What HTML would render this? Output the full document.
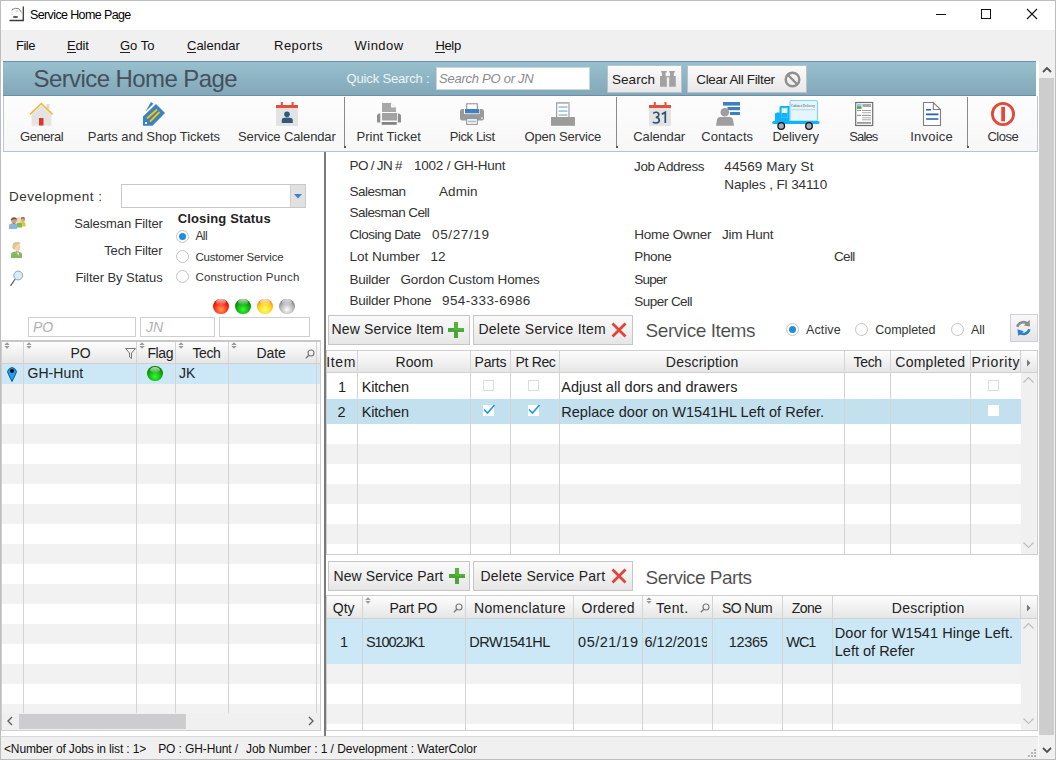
<!DOCTYPE html>
<html><head><meta charset="utf-8">
<style>
*{box-sizing:border-box;margin:0;padding:0}
html,body{width:1056px;height:760px;overflow:hidden;background:#fff;font-family:"Liberation Sans",sans-serif;color:#222;font-size:12px}
.a{position:absolute;white-space:pre}
svg{position:absolute;overflow:visible}
</style></head><body>
<div class="a" style="left:0px;top:0px;width:1056px;height:30px;background:#fff"></div>
<svg style="left:8px;top:5px" width="18" height="18" viewBox="0 0 18 18"><path d="M15.3 1.5V15.5H1.5" fill="none" stroke="#3a3a3a" stroke-width="1.3"/><ellipse cx="7.5" cy="12" rx="2.8" ry="0.8" fill="#111"/><path d="M4 4.5Q7.5 2.5 11 3.8L13.5 7.5" fill="none" stroke="#777" stroke-width="0.9"/><path d="M4 5V10" stroke="#bbb" stroke-width="0.8" stroke-dasharray="1 1"/><circle cx="9" cy="6" r="0.6" fill="#666"/></svg>
<div class="a" style="left:30.0px;top:9px;font-size:12.5px;line-height:12.5px;color:#000;font-weight:400;letter-spacing:-0.62px;">Service Home Page</div>
<div class="a" style="left:936px;top:14px;width:10px;height:1px;background:#111"></div>
<div class="a" style="left:981px;top:9px;width:10px;height:10px;border:1px solid #111"></div>
<svg style="left:1027px;top:9px" width="10" height="10" viewBox="0 0 10 10"><path d="M0 0L10 10M10 0L0 10" stroke="#111" stroke-width="1.1"/></svg>
<div class="a" style="left:0px;top:30px;width:1056px;height:31px;background:#f0f0f0"></div>
<div class="a" style="left:16.0px;top:39px;font-size:13px;line-height:13px;color:#111;font-weight:400;letter-spacing:-0.50px;">File</div>
<div class="a" style="left:67.0px;top:39px;font-size:13px;line-height:13px;color:#111;font-weight:400;letter-spacing:-0.17px;">Edit</div>
<div class="a" style="left:67px;top:52px;width:9px;height:1px;background:#222"></div>
<div class="a" style="left:120.0px;top:39px;font-size:13px;line-height:13px;color:#111;font-weight:400;letter-spacing:0.00px;">Go To</div>
<div class="a" style="left:120px;top:52px;width:10px;height:1px;background:#222"></div>
<div class="a" style="left:187.0px;top:39px;font-size:13px;line-height:13px;color:#111;font-weight:400;letter-spacing:0.00px;">Calendar</div>
<div class="a" style="left:187px;top:52px;width:9px;height:1px;background:#222"></div>
<div class="a" style="left:274.0px;top:39px;font-size:13px;line-height:13px;color:#111;font-weight:400;letter-spacing:0.50px;">Reports</div>
<div class="a" style="left:354.6px;top:39px;font-size:13px;line-height:13px;color:#111;font-weight:400;letter-spacing:0.46px;">Window</div>
<div class="a" style="left:435.4px;top:39px;font-size:13px;line-height:13px;color:#111;font-weight:400;letter-spacing:-0.33px;">Help</div>
<div class="a" style="left:435px;top:52px;width:10px;height:1px;background:#222"></div>
<div class="a" style="left:3px;top:61px;width:1033px;height:35px;background:linear-gradient(#97c0ce,#83a8b9);border-top:1px solid #6a8da8;border-bottom:1px solid #6a8da8"></div>
<div class="a" style="left:33.5px;top:67px;font-size:24px;line-height:24px;color:#46505c;font-weight:400;letter-spacing:-0.58px;">Service Home Page</div>
<div class="a" style="left:346.6px;top:72px;font-size:13px;line-height:13px;color:#eef4f8;font-weight:400;letter-spacing:-0.17px;">Quick Search :</div>
<div class="a" style="left:436px;top:67px;width:154px;height:23px;background:#fff;border:1px solid #c9d6de"></div>
<div class="a" style="left:439.0px;top:72px;font-size:13px;line-height:13px;color:#8a8a8a;font-weight:400;letter-spacing:-0.25px;;font-style:italic">Search PO or JN</div>
<div class="a" style="left:607px;top:65px;width:75px;height:28px;background:linear-gradient(#fbfbfb,#e8e8e8);border:1px solid #b8c3c9"></div>
<div class="a" style="left:612.0px;top:73px;font-size:13.5px;line-height:13.5px;color:#222;font-weight:400;letter-spacing:0.04px;">Search</div>
<svg style="left:655px;top:66px" width="30" height="26" viewBox="0 0 30 26"><path d="M6.2 5H11.8V6.6H10.6V10H11.8V20.8H5V10H7V6.6H6.2z" fill="#a2a2a2"/><path d="M14.2 5H19.8V6.6H18.9V10H20.8V20.8H14.2V10H15V6.6H14.2z" fill="#a2a2a2"/><rect x="11.5" y="10" width="3" height="1.3" fill="#a2a2a2"/><rect x="11.5" y="13.8" width="3" height="7" fill="#a2a2a2" opacity="0"/></svg>
<div class="a" style="left:687px;top:65px;width:120px;height:28px;background:linear-gradient(#fbfbfb,#e8e8e8);border:1px solid #b8c3c9"></div>
<div class="a" style="left:696.3px;top:73px;font-size:13.5px;line-height:13.5px;color:#222;font-weight:400;letter-spacing:-0.35px;">Clear All Filter</div>
<svg style="left:784px;top:71px" width="17" height="17" viewBox="0 0 17 17"><circle cx="8.5" cy="8.5" r="6.8" fill="none" stroke="#8f8f8f" stroke-width="2.4"/><path d="M4 4L13 13" stroke="#8f8f8f" stroke-width="2.4"/></svg>
<div class="a" style="left:1036px;top:61px;width:3px;height:676px;background:#fff"></div>
<div class="a" style="left:1039px;top:61px;width:16px;height:698px;background:#f0f0f0"></div>
<div class="a" style="left:1039px;top:78px;width:15px;height:657px;background:#cdcdcd"></div>
<svg style="left:1042px;top:66px" width="10" height="8" viewBox="0 0 10 8"><path d="M1 6L5 2L9 6" fill="none" stroke="#505050" stroke-width="1.8"/></svg>
<svg style="left:1042px;top:746px" width="10" height="8" viewBox="0 0 10 8"><path d="M1 2L5 6L9 2" fill="none" stroke="#505050" stroke-width="1.8"/></svg>
<div class="a" style="left:3px;top:96px;width:1035px;height:56px;background:linear-gradient(#fdfdfd,#f7f7f7);border-left:1px solid #b9c9da;border-right:1px solid #b9c9da;border-bottom:1px solid #b0c2d6"></div>
<div class="a" style="left:344px;top:97px;width:1px;height:51px;background:#8a8a8a"></div>
<div class="a" style="left:343.5px;top:146px;width:2px;height:2px;background:#555"></div>
<div class="a" style="left:616px;top:97px;width:1px;height:51px;background:#8a8a8a"></div>
<div class="a" style="left:615.5px;top:146px;width:2px;height:2px;background:#555"></div>
<div class="a" style="left:967px;top:97px;width:1px;height:51px;background:#8a8a8a"></div>
<div class="a" style="left:966.5px;top:146px;width:2px;height:2px;background:#555"></div>
<div class="a" style="left:20.0px;top:130px;font-size:13px;line-height:13px;color:#333;font-weight:400;letter-spacing:-0.42px;">General</div>
<div class="a" style="left:87.8px;top:130px;font-size:13px;line-height:13px;color:#333;font-weight:400;letter-spacing:-0.07px;">Parts and Shop Tickets</div>
<div class="a" style="left:238.0px;top:130px;font-size:13px;line-height:13px;color:#333;font-weight:400;letter-spacing:-0.13px;">Service Calendar</div>
<div class="a" style="left:356.5px;top:130px;font-size:13px;line-height:13px;color:#333;font-weight:400;letter-spacing:0.00px;">Print Ticket</div>
<div class="a" style="left:449.7px;top:130px;font-size:13px;line-height:13px;color:#333;font-weight:400;letter-spacing:-0.38px;">Pick List</div>
<div class="a" style="left:524.5px;top:130px;font-size:13px;line-height:13px;color:#333;font-weight:400;letter-spacing:-0.18px;">Open Service</div>
<div class="a" style="left:633.3px;top:130px;font-size:13px;line-height:13px;color:#333;font-weight:400;letter-spacing:-0.14px;">Calendar</div>
<div class="a" style="left:701.3px;top:130px;font-size:13px;line-height:13px;color:#333;font-weight:400;letter-spacing:0.07px;">Contacts</div>
<div class="a" style="left:772.5px;top:130px;font-size:13px;line-height:13px;color:#333;font-weight:400;letter-spacing:-0.07px;">Delivery</div>
<div class="a" style="left:849.3px;top:130px;font-size:13px;line-height:13px;color:#333;font-weight:400;letter-spacing:-0.88px;">Sales</div>
<div class="a" style="left:910.3px;top:130px;font-size:13px;line-height:13px;color:#333;font-weight:400;letter-spacing:0.20px;">Invoice</div>
<div class="a" style="left:987.4px;top:130px;font-size:13px;line-height:13px;color:#333;font-weight:400;letter-spacing:-0.50px;">Close</div>
<svg style="left:29px;top:102px" width="26" height="26" viewBox="0 0 26 26"><path d="M2.5 12L12.5 3L22.5 12V24H2.5z" fill="#e4e4e4" stroke="#f2f2f2" stroke-width="1"/><rect x="17.5" y="2" width="3" height="5" fill="#dcdcdc"/><path d="M1 12.3L12.3 1.5L23.6 12.3" fill="none" stroke="#f4b92c" stroke-width="1.6"/><rect x="10" y="16" width="4.5" height="7.5" fill="#d8392b"/></svg>
<svg style="left:135px;top:98px" width="32" height="32" viewBox="0 0 32 32"><path d="M8 18.5L21 6L30 15L17.5 27.8H8z" fill="#3b82c4"/><path d="M10.5 13.5L16 4L18.5 5.8z" fill="#3b82c4"/><path d="M12.5 20L21.5 12M15.5 23L24 14.5" stroke="#f7c600" stroke-width="1.8" stroke-linecap="round"/><rect x="10" y="24" width="2" height="2" fill="#fff"/></svg>
<svg style="left:270px;top:98px" width="35" height="32" viewBox="0 0 35 32"><rect x="6" y="11" width="22" height="17" fill="#e3e3e3"/><rect x="6" y="7" width="22" height="3.2" fill="#e0503c"/><rect x="10.8" y="4" width="2" height="3.5" fill="#e0503c"/><rect x="21.6" y="4" width="2" height="3.5" fill="#e0503c"/><circle cx="17" cy="16.3" r="2.8" fill="#2f5a78"/><path d="M11.8 25V22C11.8 20.2 13.5 19.5 17 19.5C20.5 19.5 22.8 20.2 22.8 22V25z" fill="#2f5a78"/></svg>
<svg style="left:372px;top:98px" width="35" height="32" viewBox="0 0 35 32"><path d="M10 5H19L24 9.5V14H10z" fill="#a8a8a8"/><path d="M19 5V9.5H24" fill="#fafafa"/><rect x="10" y="15" width="15" height="7.5" fill="#a3a3a3"/><path d="M5 17L7 15.5H8.3V24.5H5z" fill="#8f8f8f"/><path d="M29 17L27 15.5H25.8V24.5H29z" fill="#8f8f8f"/><rect x="9.7" y="24" width="15" height="2.8" fill="#838383"/></svg>
<svg style="left:455px;top:98px" width="35" height="32" viewBox="0 0 35 32"><rect x="11.7" y="5.8" width="10.6" height="6" fill="#fff" stroke="#8a8a8a" stroke-width="1"/><rect x="5" y="11" width="24" height="11.5" rx="2.2" fill="#9a9a9a"/><rect x="9" y="11" width="15.5" height="5" fill="#fff"/><rect x="10" y="11" width="14" height="4" fill="#3f7ec0"/><rect x="10" y="15" width="14" height="1.2" fill="#bcd3e8"/><rect x="11.7" y="20.3" width="10.6" height="6" fill="#fff" stroke="#8a8a8a" stroke-width="1"/><rect x="13" y="21.5" width="8" height="1.2" fill="#c8dbeb"/><rect x="13" y="23" width="8" height="1.3" fill="#9fc0dd"/><rect x="26" y="19.6" width="2" height="1" fill="#fff"/></svg>
<svg style="left:545px;top:98px" width="35" height="32" viewBox="0 0 35 32"><rect x="11.7" y="4.7" width="12.3" height="15" fill="#fff" stroke="#8a8a8a" stroke-width="1"/><rect x="12" y="4.5" width="11.8" height="1.5" fill="#c2c2c2"/><rect x="13.5" y="8.3" width="9" height="1.5" fill="#98bcdb"/><rect x="13.5" y="12.3" width="9" height="1.5" fill="#98bcdb"/><rect x="13.5" y="16.3" width="9" height="1.5" fill="#98bcdb"/><rect x="6" y="19" width="24" height="8.8" fill="#9c9c9c"/></svg>
<svg style="left:642px;top:98px" width="35" height="32" viewBox="0 0 35 32"><rect x="7" y="11" width="22" height="17" fill="#e3e3e3"/><rect x="7" y="7" width="22" height="3.2" fill="#e0503c"/><rect x="11.8" y="4" width="2" height="3.5" fill="#e0503c"/><rect x="22.5" y="4" width="2" height="3.5" fill="#e0503c"/><path d="M11.2 15.3Q13 14 14.8 14.3Q17 14.8 16.8 17Q16.5 19 13.8 19.2Q17.3 19.5 17.3 22.2Q17.2 25 14 25Q12 25 10.8 24" fill="none" stroke="#2a4f6e" stroke-width="1.6"/><path d="M19.8 16.2L23.3 14.2V25" fill="none" stroke="#2a4f6e" stroke-width="1.7"/></svg>
<svg style="left:710px;top:98px" width="35" height="32" viewBox="0 0 35 32"><rect x="13" y="4" width="17" height="3.6" fill="#3f7fc0"/><rect x="17.5" y="9" width="12.5" height="3.2" fill="#3f7fc0"/><rect x="20" y="14" width="10" height="3" fill="#3f7fc0"/><circle cx="14.8" cy="14.3" r="4.3" fill="#9e9e9e"/><path d="M6 27.8L7 21.5C7.5 19.5 9 19 11 19H18.5C20.5 19 22.5 19.5 23 21.5L24 27.8z" fill="#9e9e9e"/></svg>
<svg style="left:768px;top:96px" width="56" height="36" viewBox="0 0 56 36"><rect x="22" y="4.5" width="27.5" height="20.5" rx="1.5" fill="#e6f5fc" stroke="#7fd6fb" stroke-width="1.2"/><text x="35" y="10.8" text-anchor="middle" font-family="Liberation Serif" font-size="3.5" fill="#444">Cabinet Delivery</text><rect x="23.5" y="13" width="23.5" height="1.3" fill="#b7e1f2"/><path d="M7 26V17.5L9 16.5H11.5V11.5C11.5 10.5 12.5 10 13.5 10H21.5V26z" fill="#10b4f8"/><rect x="13.5" y="12" width="6" height="9.5" fill="#e8f7fd" stroke="#5fc7f5" stroke-width="0.6"/><rect x="13.5" y="17" width="6" height="4.5" fill="#10b4f8"/><rect x="4.2" y="25" width="47.3" height="3" rx="1.5" fill="#10b4f8"/><circle cx="13.2" cy="30" r="3.3" fill="#9fb0b8" stroke="#111" stroke-width="1.3"/><circle cx="41" cy="30" r="3.3" fill="#9fb0b8" stroke="#111" stroke-width="1.3"/></svg>
<svg style="left:848px;top:98px" width="32" height="32" viewBox="0 0 32 32"><rect x="7.7" y="4.5" width="17" height="23" fill="#fff" stroke="#6e6e6e" stroke-width="1.2"/><rect x="9" y="5.8" width="4.5" height="2.5" fill="#8ccbf0"/><rect x="9" y="8.3" width="4.5" height="2.5" fill="#4aa52a"/><rect x="14.5" y="6" width="8.5" height="3" fill="#a8a8a8"/><rect x="9" y="12" width="4" height="1" fill="#9a9a9a"/><rect x="14" y="12" width="9" height="1" fill="#a0a0a0"/><rect x="14" y="14.2" width="9" height="1" fill="#b0b0b0"/><rect x="9" y="16.8" width="4" height="1.2" fill="#9a9a9a"/><rect x="14" y="16.8" width="9" height="1.2" fill="#a0a0a0"/><rect x="14" y="19.3" width="9" height="1" fill="#b0b0b0"/><rect x="14" y="21.3" width="9" height="1" fill="#a8a8a8"/><rect x="9" y="24" width="14" height="1.8" fill="#9a9a9a"/></svg>
<svg style="left:916px;top:98px" width="32" height="32" viewBox="0 0 32 32"><path d="M7.5 4.5H17.3L24.5 11.5V27.5H7.5z" fill="#fff" stroke="#7e7e7e" stroke-width="1.1"/><path d="M17.3 4.5V11.5H24.5" fill="none" stroke="#7e7e7e" stroke-width="1.1"/><path d="M10.7 11.7H14.5M10.7 16.4H21.8M10.7 21H21.8" stroke="#1f5fae" stroke-width="1.6" stroke-linecap="round"/></svg>
<svg style="left:986px;top:98px" width="34" height="32" viewBox="0 0 34 32"><circle cx="17" cy="16" r="10.6" fill="none" stroke="#e04a3a" stroke-width="2.8"/><rect x="15.2" y="8.8" width="3.8" height="14.5" fill="#e04a3a"/></svg>
<div class="a" style="left:0px;top:736px;width:1038px;height:1px;background:#d9d9d9"></div>
<div class="a" style="left:0px;top:737px;width:1038px;height:22px;background:#f0f0f0"></div>
<div class="a" style="left:1034px;top:749px;width:2px;height:2px;background:#b5b5b5"></div>
<div class="a" style="left:1031px;top:752px;width:2px;height:2px;background:#b5b5b5"></div>
<div class="a" style="left:1034px;top:752px;width:2px;height:2px;background:#b5b5b5"></div>
<div class="a" style="left:1028px;top:755px;width:2px;height:2px;background:#b5b5b5"></div>
<div class="a" style="left:1031px;top:755px;width:2px;height:2px;background:#b5b5b5"></div>
<div class="a" style="left:1034px;top:755px;width:2px;height:2px;background:#b5b5b5"></div>
<div class="a" style="left:4.0px;top:743px;font-size:12px;line-height:12px;color:#111;font-weight:400;letter-spacing:-0.14px;">&lt;Number of Jobs in list : 1&gt;</div>
<div class="a" style="left:158.2px;top:743px;font-size:12px;line-height:12px;color:#111;font-weight:400;letter-spacing:-0.11px;">PO : GH-Hunt /</div>
<div class="a" style="left:246.0px;top:743px;font-size:12px;line-height:12px;color:#111;font-weight:400;letter-spacing:-0.05px;">Job Number : 1 / Development : WaterColor</div>
<div class="a" style="left:9.0px;top:190px;font-size:13.5px;line-height:13.5px;color:#333;font-weight:400;letter-spacing:0.50px;">Development :</div>
<div class="a" style="left:121px;top:184px;width:185px;height:24px;background:#fff;border:1px solid #c8c8c8"></div>
<div class="a" style="left:290px;top:185px;width:15px;height:22px;background:#e1e1e1;border-left:1px solid #cfcfcf"></div>
<svg style="left:293.5px;top:194px" width="8" height="4.5" viewBox="0 0 8 4.5"><path d="M0 0H8L4 4.5z" fill="#3a86c8"/></svg>
<svg style="left:6px;top:214px" width="22" height="18" viewBox="0 0 22 18"><path d="M14 12.5V10C14 8.5 15.5 8 17 8S19.5 8.5 19.5 10V12.5z" fill="#f0c030"/><circle cx="16.8" cy="5.7" r="2.4" fill="#d9a878"/><path d="M14.5 5C14.5 3.5 15.5 3 16.8 3S19 3.5 19 5C18 4.3 16 4.3 14.5 5z" fill="#777"/><path d="M10.3 13.5V10.5C10.3 9 11.5 8.5 13.2 8.5S16 9 16 10.5V13.5z" fill="#7cbd50"/><circle cx="12.8" cy="6.2" r="2.5" fill="#f2d6b5"/><path d="M10.3 5.5C10.3 4 11.5 3.2 12.8 3.2S15.3 4 15.3 5.3C14 4.5 12 4.5 10.3 5.5z" fill="#e5d59a"/><path d="M3 15V11.5C3 10 4.5 9.3 7.2 9.3S11.2 10 11.2 11.5V15z" fill="#8ab6de"/><circle cx="8" cy="6.6" r="2.9" fill="#dba070"/><path d="M5 6C5 4 6.3 3.2 8 3.2S11 4 11 5.8C10 5 7 5 5 6.5z" fill="#5c5c5c"/><path d="M6.5 8.5Q8 10.5 9.5 8.5L9 9.8Q8 10.5 7 9.8z" fill="#8a5a30"/></svg>
<svg style="left:6px;top:238px" width="22" height="24" viewBox="0 0 22 24"><path d="M5 20V16.5C5 14.5 7 13.5 10.5 13.5S16 14.5 16 16.5V20z" fill="#82b962"/><path d="M11 14.5L12.3 18L13 14.5z" fill="#fff"/><rect x="10" y="12" width="3" height="2.5" fill="#d9a888"/><ellipse cx="11.5" cy="9.3" rx="2.8" ry="4" fill="#f2d4b2"/><path d="M6.5 10C6.3 6 7.5 4 10.5 4C13 4 14.8 4.5 14.8 5.5C13 5.5 10.5 6.5 9.2 9L8.5 12.5z" fill="#d8c68e"/></svg>
<svg style="left:9px;top:269px" width="16" height="18" viewBox="0 0 16 18"><circle cx="9.2" cy="6.5" r="4.4" fill="#d7ecf7" stroke="#8fa3ad" stroke-width="1"/><path d="M6.2 10L1.5 16.8" stroke="#5a5a5a" stroke-width="1.2"/></svg>
<div class="a" style="left:74.2px;top:217px;font-size:13px;line-height:13px;color:#333;font-weight:400;letter-spacing:-0.12px;">Salesman Filter</div>
<div class="a" style="left:104.3px;top:244px;font-size:13px;line-height:13px;color:#333;font-weight:400;letter-spacing:-0.18px;">Tech Filter</div>
<div class="a" style="left:75.4px;top:271px;font-size:13px;line-height:13px;color:#333;font-weight:400;letter-spacing:-0.06px;">Filter By Status</div>
<div class="a" style="left:177.7px;top:212px;font-size:13px;line-height:13px;color:#222;font-weight:700;letter-spacing:0.15px;">Closing Status</div>
<div class="a" style="left:175.5px;top:229.5px;width:13px;height:13px;border-radius:50%;background:#fff;border:1px solid #c4c4c4"></div>
<div class="a" style="left:178.5px;top:232.5px;width:7px;height:7px;border-radius:50%;background:#1e8fe0"></div>
<div class="a" style="left:175.5px;top:250.0px;width:13px;height:13px;border-radius:50%;background:#fff;border:1px solid #c4c4c4"></div>
<div class="a" style="left:175.5px;top:270.0px;width:13px;height:13px;border-radius:50%;background:#fff;border:1px solid #c4c4c4"></div>
<div class="a" style="left:195.4px;top:230px;font-size:12px;line-height:12px;color:#333;font-weight:400;letter-spacing:-0.55px;">All</div>
<div class="a" style="left:195.4px;top:252px;font-size:11.5px;line-height:11.5px;color:#333;font-weight:400;letter-spacing:-0.21px;">Customer Service</div>
<div class="a" style="left:195.4px;top:272px;font-size:11.5px;line-height:11.5px;color:#333;font-weight:400;letter-spacing:0.21px;">Construction Punch</div>
<div class="a" style="left:213.2px;top:298.5px;width:15.6px;height:15.6px;border-radius:50%;background:radial-gradient(circle at 50% 70%,#ffa060 0%,#ff2a10 50%,#800000 100%)"></div>
<div class="a" style="left:216px;top:299.3px;width:10px;height:6px;border-radius:50%;background:linear-gradient(rgba(255,255,255,0.75),rgba(255,255,255,0.05))"></div>
<div class="a" style="left:235.2px;top:298.5px;width:15.6px;height:15.6px;border-radius:50%;background:radial-gradient(circle at 50% 70%,#30ff30 0%,#12a812 50%,#054a05 100%)"></div>
<div class="a" style="left:238px;top:299.3px;width:10px;height:6px;border-radius:50%;background:linear-gradient(rgba(255,255,255,0.75),rgba(255,255,255,0.05))"></div>
<div class="a" style="left:257.2px;top:298.5px;width:15.6px;height:15.6px;border-radius:50%;background:radial-gradient(circle at 50% 70%,#ffff70 0%,#ffd020 50%,#ff3a00 100%)"></div>
<div class="a" style="left:260px;top:299.3px;width:10px;height:6px;border-radius:50%;background:linear-gradient(rgba(255,255,255,0.75),rgba(255,255,255,0.05))"></div>
<div class="a" style="left:279.2px;top:298.5px;width:15.6px;height:15.6px;border-radius:50%;background:radial-gradient(circle at 50% 70%,#ffffff 0%,#b4b4b4 50%,#4a4a4a 100%)"></div>
<div class="a" style="left:282px;top:299.3px;width:10px;height:6px;border-radius:50%;background:linear-gradient(rgba(255,255,255,0.75),rgba(255,255,255,0.05))"></div>
<div class="a" style="left:28px;top:317px;width:108px;height:20px;background:#fff;border:1px solid #cfcfcf"></div>
<div class="a" style="left:140px;top:317px;width:75px;height:20px;background:#fff;border:1px solid #cfcfcf"></div>
<div class="a" style="left:219px;top:317px;width:91px;height:20px;background:#fff;border:1px solid #cfcfcf"></div>
<div class="a" style="left:33.0px;top:320px;font-size:14px;line-height:14px;color:#b0b0b0;font-weight:400;;font-style:italic">PO</div>
<div class="a" style="left:146.0px;top:320px;font-size:14px;line-height:14px;color:#b0b0b0;font-weight:400;;font-style:italic">JN</div>
<div class="a" style="left:1px;top:340px;width:320px;height:391px;background:#fff;border:1px solid #cfcfcf;border-top:2px solid #c8c8c8"></div>
<div class="a" style="left:2px;top:342px;width:318px;height:22px;background:linear-gradient(#fdfdfd,#e6e6e6);border-bottom:1px solid #d0d0d0"></div>
<div class="a" style="left:2px;top:364px;width:318px;height:20px;background:#cce8f6"></div>
<div class="a" style="left:2px;top:384px;width:318px;height:20px;background:#f2f2f2"></div>
<div class="a" style="left:2px;top:404px;width:318px;height:20px;background:#fff"></div>
<div class="a" style="left:2px;top:424px;width:318px;height:20px;background:#f2f2f2"></div>
<div class="a" style="left:2px;top:444px;width:318px;height:20px;background:#fff"></div>
<div class="a" style="left:2px;top:464px;width:318px;height:20px;background:#f2f2f2"></div>
<div class="a" style="left:2px;top:484px;width:318px;height:20px;background:#fff"></div>
<div class="a" style="left:2px;top:504px;width:318px;height:20px;background:#f2f2f2"></div>
<div class="a" style="left:2px;top:524px;width:318px;height:20px;background:#fff"></div>
<div class="a" style="left:2px;top:544px;width:318px;height:20px;background:#f2f2f2"></div>
<div class="a" style="left:2px;top:564px;width:318px;height:20px;background:#fff"></div>
<div class="a" style="left:2px;top:584px;width:318px;height:20px;background:#f2f2f2"></div>
<div class="a" style="left:2px;top:604px;width:318px;height:20px;background:#fff"></div>
<div class="a" style="left:2px;top:624px;width:318px;height:20px;background:#f2f2f2"></div>
<div class="a" style="left:2px;top:644px;width:318px;height:20px;background:#fff"></div>
<div class="a" style="left:2px;top:664px;width:318px;height:20px;background:#f2f2f2"></div>
<div class="a" style="left:2px;top:684px;width:318px;height:20px;background:#fff"></div>
<div class="a" style="left:2px;top:704px;width:318px;height:9px;background:#f2f2f2"></div>
<div class="a" style="left:23px;top:342px;width:1px;height:371px;background:#d4d4d4"></div>
<div class="a" style="left:136px;top:342px;width:1px;height:371px;background:#d4d4d4"></div>
<div class="a" style="left:175px;top:342px;width:1px;height:371px;background:#d4d4d4"></div>
<div class="a" style="left:228px;top:342px;width:1px;height:371px;background:#d4d4d4"></div>
<div class="a" style="left:316px;top:342px;width:1px;height:371px;background:#d4d4d4"></div>
<div class="a" style="left:70.4px;top:346px;font-size:14px;line-height:14px;color:#222;font-weight:400;">PO</div>
<div class="a" style="left:147.4px;top:346px;font-size:14px;line-height:14px;color:#222;font-weight:400;letter-spacing:-0.40px;">Flag</div>
<div class="a" style="left:192.5px;top:346px;font-size:14px;line-height:14px;color:#222;font-weight:400;letter-spacing:-0.40px;">Tech</div>
<div class="a" style="left:256.5px;top:346px;font-size:14px;line-height:14px;color:#222;font-weight:400;letter-spacing:-0.08px;">Date</div>
<svg style="left:4px;top:342px" width="6" height="7" viewBox="0 0 6 7"><path d="M0.3 3L3 0.2L5.7 3zM0.3 4L3 6.8L5.7 4z" fill="#999"/></svg>
<svg style="left:26px;top:342px" width="6" height="7" viewBox="0 0 6 7"><path d="M0.3 3L3 0.2L5.7 3zM0.3 4L3 6.8L5.7 4z" fill="#999"/></svg>
<svg style="left:139px;top:342px" width="6" height="7" viewBox="0 0 6 7"><path d="M0.3 3L3 0.2L5.7 3zM0.3 4L3 6.8L5.7 4z" fill="#999"/></svg>
<svg style="left:178px;top:342px" width="6" height="7" viewBox="0 0 6 7"><path d="M0.3 3L3 0.2L5.7 3zM0.3 4L3 6.8L5.7 4z" fill="#999"/></svg>
<svg style="left:231px;top:342px" width="6" height="7" viewBox="0 0 6 7"><path d="M0.3 3L3 0.2L5.7 3zM0.3 4L3 6.8L5.7 4z" fill="#999"/></svg>
<svg style="left:125px;top:348px" width="11" height="11" viewBox="0 0 11 11"><path d="M0.5 0.5H10.5L6.5 5V10.5L4.5 9V5z" fill="none" stroke="#777" stroke-width="1"/></svg>
<svg style="left:305px;top:349px" width="10" height="10" viewBox="0 0 10 10"><circle cx="6" cy="4" r="3" fill="none" stroke="#777" stroke-width="1.1"/><path d="M3.8 6.2L0.8 9.2" stroke="#777" stroke-width="1.3"/></svg>
<svg style="left:7px;top:366px" width="10" height="16" viewBox="0 0 10 16"><path d="M5 15.5L1.5 8.5A4.3 4.3 0 1 1 8.5 8.5z" fill="#1aa3f0" stroke="#0a3a6a" stroke-width="0.8"/><circle cx="5" cy="5" r="2" fill="#000"/></svg>
<div class="a" style="left:27.4px;top:366px;font-size:14px;line-height:14px;color:#222;font-weight:400;letter-spacing:0.10px;">GH-Hunt</div>
<div class="a" style="left:147.2px;top:365.7px;width:15.6px;height:15.6px;border-radius:50%;background:radial-gradient(circle at 50% 70%,#30ff30 0%,#12a812 50%,#054a05 100%)"></div>
<div class="a" style="left:150px;top:366.5px;width:10px;height:6px;border-radius:50%;background:linear-gradient(rgba(255,255,255,0.75),rgba(255,255,255,0.05))"></div>
<div class="a" style="left:179.0px;top:366px;font-size:14px;line-height:14px;color:#222;font-weight:400;">JK</div>
<div class="a" style="left:2px;top:713px;width:318px;height:17px;background:#f0f0f0"></div>
<div class="a" style="left:19px;top:714px;width:167px;height:15px;background:#cdcdcf"></div>
<svg style="left:7px;top:716px" width="6" height="10" viewBox="0 0 6 10"><path d="M5 1L1 5L5 9" fill="none" stroke="#606060" stroke-width="1.4"/></svg>
<svg style="left:308px;top:716px" width="6" height="10" viewBox="0 0 6 10"><path d="M1 1L5 5L1 9" fill="none" stroke="#606060" stroke-width="1.4"/></svg>
<div class="a" style="left:324px;top:152px;width:2px;height:584px;background:#7a7a7a"></div>
<div class="a" style="left:349.6px;top:159px;font-size:13.5px;line-height:13.5px;color:#333;font-weight:400;letter-spacing:-0.70px;">PO / JN #</div>
<div class="a" style="left:414.0px;top:159px;font-size:13.5px;line-height:13.5px;color:#333;font-weight:400;letter-spacing:-0.23px;">1002 / GH-Hunt</div>
<div class="a" style="left:349.6px;top:185px;font-size:13.5px;line-height:13.5px;color:#333;font-weight:400;letter-spacing:-0.51px;">Salesman</div>
<div class="a" style="left:439.0px;top:185px;font-size:13.5px;line-height:13.5px;color:#333;font-weight:400;letter-spacing:0.07px;">Admin</div>
<div class="a" style="left:349.6px;top:206px;font-size:13.5px;line-height:13.5px;color:#333;font-weight:400;letter-spacing:-0.57px;">Salesman Cell</div>
<div class="a" style="left:349.6px;top:228px;font-size:13.5px;line-height:13.5px;color:#333;font-weight:400;letter-spacing:-0.53px;">Closing Date</div>
<div class="a" style="left:432.0px;top:228px;font-size:13.5px;line-height:13.5px;color:#333;font-weight:400;letter-spacing:0.64px;">05/27/19</div>
<div class="a" style="left:349.6px;top:250px;font-size:13.5px;line-height:13.5px;color:#333;font-weight:400;letter-spacing:-0.04px;">Lot Number</div>
<div class="a" style="left:430.6px;top:250px;font-size:13.5px;line-height:13.5px;color:#333;font-weight:400;">12</div>
<div class="a" style="left:349.6px;top:273px;font-size:13.5px;line-height:13.5px;color:#333;font-weight:400;letter-spacing:-0.25px;">Builder</div>
<div class="a" style="left:400.4px;top:273px;font-size:13.5px;line-height:13.5px;color:#333;font-weight:400;letter-spacing:-0.13px;">Gordon Custom Homes</div>
<div class="a" style="left:349.6px;top:294px;font-size:13.5px;line-height:13.5px;color:#333;font-weight:400;letter-spacing:-0.25px;">Builder Phone</div>
<div class="a" style="left:442.0px;top:294px;font-size:13.5px;line-height:13.5px;color:#333;font-weight:400;letter-spacing:0.39px;">954-333-6986</div>
<div class="a" style="left:634.1px;top:160px;font-size:13.5px;line-height:13.5px;color:#333;font-weight:400;letter-spacing:-0.39px;">Job Address</div>
<div class="a" style="left:724.3px;top:160px;font-size:13.5px;line-height:13.5px;color:#333;font-weight:400;letter-spacing:0.11px;">44569 Mary St</div>
<div class="a" style="left:724.3px;top:178px;font-size:13.5px;line-height:13.5px;color:#333;font-weight:400;letter-spacing:-0.12px;">Naples , Fl 34110</div>
<div class="a" style="left:634.3px;top:228px;font-size:13.5px;line-height:13.5px;color:#333;font-weight:400;letter-spacing:-0.26px;">Home Owner</div>
<div class="a" style="left:722.0px;top:228px;font-size:13.5px;line-height:13.5px;color:#333;font-weight:400;letter-spacing:-0.24px;">Jim Hunt</div>
<div class="a" style="left:634.3px;top:250px;font-size:13.5px;line-height:13.5px;color:#333;font-weight:400;letter-spacing:-0.38px;">Phone</div>
<div class="a" style="left:834.0px;top:250px;font-size:13.5px;line-height:13.5px;color:#333;font-weight:400;letter-spacing:-0.67px;">Cell</div>
<div class="a" style="left:634.3px;top:273px;font-size:13.5px;line-height:13.5px;color:#333;font-weight:400;letter-spacing:-0.75px;">Super</div>
<div class="a" style="left:634.3px;top:295px;font-size:13.5px;line-height:13.5px;color:#333;font-weight:400;letter-spacing:-0.53px;">Super Cell</div>
<div class="a" style="left:328px;top:315px;width:142px;height:30px;background:linear-gradient(#fafafa,#e6e6e6);border:1px solid #c6c6c6"></div>
<div class="a" style="left:331.5px;top:322px;font-size:14px;line-height:14px;color:#222;font-weight:400;letter-spacing:0.17px;">New Service Item</div>
<svg style="left:448px;top:322px" width="16" height="16" viewBox="0 0 16 16"><path d="M6 0h4v6h6v4h-6v6H6v-6H0V6h6z" fill="#4aa534"/><path d="M6 0h4v6h6v2H6z" fill="#5cbf40" opacity="0.6"/></svg>
<div class="a" style="left:473px;top:315px;width:160px;height:30px;background:linear-gradient(#fafafa,#e6e6e6);border:1px solid #c6c6c6"></div>
<div class="a" style="left:478.4px;top:322px;font-size:14px;line-height:14px;color:#222;font-weight:400;letter-spacing:0.29px;">Delete Service Item</div>
<svg style="left:611px;top:322px" width="16" height="16" viewBox="0 0 16 16"><path d="M1.5 1.5L14.5 14.5M14.5 1.5L1.5 14.5" stroke="#e0433a" stroke-width="2.8"/></svg>
<div class="a" style="left:645.5px;top:321px;font-size:19px;line-height:19px;color:#4a4a4a;font-weight:400;letter-spacing:-0.43px;-webkit-text-stroke:0.1px #fff">Service Items</div>
<div class="a" style="left:786.0px;top:322.5px;width:13px;height:13px;border-radius:50%;background:#fff;border:1px solid #c4c4c4"></div>
<div class="a" style="left:789.0px;top:325.5px;width:7px;height:7px;border-radius:50%;background:#1e8fe0"></div>
<div class="a" style="left:855.2px;top:322.5px;width:13px;height:13px;border-radius:50%;background:#fff;border:1px solid #c4c4c4"></div>
<div class="a" style="left:951.0px;top:322.5px;width:13px;height:13px;border-radius:50%;background:#fff;border:1px solid #c4c4c4"></div>
<div class="a" style="left:806.0px;top:324px;font-size:12.5px;line-height:12.5px;color:#333;font-weight:400;letter-spacing:0.12px;">Active</div>
<div class="a" style="left:875.3px;top:324px;font-size:12.5px;line-height:12.5px;color:#333;font-weight:400;letter-spacing:-0.05px;">Completed</div>
<div class="a" style="left:971.0px;top:324px;font-size:12.5px;line-height:12.5px;color:#333;font-weight:400;letter-spacing:0.00px;">All</div>
<div class="a" style="left:1010px;top:314px;width:28px;height:28px;background:linear-gradient(#f8f8f8,#e6e6e6);border:1px solid #cdd1d6"></div>
<svg style="left:1005px;top:310px" width="36" height="36" viewBox="0 0 36 36"><path d="M12.3 16.8A6.2 6.2 0 0 1 22.5 13.8" fill="none" stroke="#8c8c8c" stroke-width="2.6"/><path d="M24.6 9.8L25 16.6L18.8 15.6z" fill="#8c8c8c"/><path d="M24.3 19.2A6.2 6.2 0 0 1 14 22.3" fill="none" stroke="#2f7fc8" stroke-width="2.6"/><path d="M12.4 19.3L13.3 26L18.8 21.3z" fill="#2f7fc8"/></svg>
<div class="a" style="left:326px;top:350px;width:712px;height:205px;background:#fff;border:1px solid #cfcfcf"></div>
<div class="a" style="left:327px;top:351px;width:694px;height:22px;background:linear-gradient(#fdfdfd,#e6e6e6);border-bottom:1px solid #d0d0d0"></div>
<div class="a" style="left:1021px;top:351px;width:16px;height:203px;background:#f0f0f0"></div>
<div class="a" style="left:1021px;top:351px;width:16px;height:22px;background:linear-gradient(#fdfdfd,#e6e6e6);border-bottom:1px solid #d0d0d0"></div>
<div class="a" style="left:327px;top:373px;width:694px;height:26px;background:#fff"></div>
<div class="a" style="left:327px;top:399px;width:694px;height:25px;background:#c3e0ee"></div>
<div class="a" style="left:327px;top:424px;width:694px;height:20px;background:#fff"></div>
<div class="a" style="left:327px;top:444px;width:694px;height:20px;background:#f2f2f2"></div>
<div class="a" style="left:327px;top:464px;width:694px;height:20px;background:#fff"></div>
<div class="a" style="left:327px;top:484px;width:694px;height:20px;background:#f2f2f2"></div>
<div class="a" style="left:327px;top:504px;width:694px;height:20px;background:#fff"></div>
<div class="a" style="left:327px;top:524px;width:694px;height:20px;background:#f2f2f2"></div>
<div class="a" style="left:327px;top:544px;width:694px;height:10px;background:#fff"></div>
<div class="a" style="left:357px;top:351px;width:1px;height:203px;background:#d4d4d4"></div>
<div class="a" style="left:470px;top:351px;width:1px;height:203px;background:#d4d4d4"></div>
<div class="a" style="left:510px;top:351px;width:1px;height:203px;background:#d4d4d4"></div>
<div class="a" style="left:559px;top:351px;width:1px;height:203px;background:#d4d4d4"></div>
<div class="a" style="left:844px;top:351px;width:1px;height:203px;background:#d4d4d4"></div>
<div class="a" style="left:890px;top:351px;width:1px;height:203px;background:#d4d4d4"></div>
<div class="a" style="left:970px;top:351px;width:1px;height:203px;background:#d4d4d4"></div>
<div class="a" style="left:1020px;top:351px;width:1px;height:22px;background:#d4d4d4"></div>
<div class="a" style="left:326.2px;top:355px;font-size:14px;line-height:14px;color:#222;font-weight:400;letter-spacing:0.67px;">Item</div>
<div class="a" style="left:395.5px;top:355px;font-size:14px;line-height:14px;color:#222;font-weight:400;letter-spacing:0.07px;">Room</div>
<div class="a" style="left:474.6px;top:355px;font-size:14px;line-height:14px;color:#222;font-weight:400;letter-spacing:-0.20px;">Parts</div>
<div class="a" style="left:515.6px;top:355px;font-size:14px;line-height:14px;color:#222;font-weight:400;letter-spacing:-0.36px;">Pt Rec</div>
<div class="a" style="left:665.8px;top:355px;font-size:14px;line-height:14px;color:#222;font-weight:400;letter-spacing:0.24px;">Description</div>
<div class="a" style="left:853.5px;top:355px;font-size:14px;line-height:14px;color:#222;font-weight:400;letter-spacing:-0.33px;">Tech</div>
<div class="a" style="left:895.3px;top:355px;font-size:14px;line-height:14px;color:#222;font-weight:400;letter-spacing:0.25px;">Completed</div>
<div class="a" style="left:971.5px;top:355px;font-size:14px;line-height:14px;color:#222;font-weight:400;letter-spacing:0.64px;">Priority</div>
<svg style="left:1026px;top:359px" width="5" height="8" viewBox="0 0 5 8"><path d="M1 0.5L4.5 4L1 7.5z" fill="#777"/></svg>
<svg style="left:1022px;top:376px" width="13" height="8" viewBox="0 0 13 8"><path d="M1.5 6.5L6.5 1.5L11.5 6.5" fill="none" stroke="#bdbdbd" stroke-width="1.2"/></svg>
<svg style="left:1022px;top:541px" width="13" height="8" viewBox="0 0 13 8"><path d="M1.5 1.5L6.5 6.5L11.5 1.5" fill="none" stroke="#bdbdbd" stroke-width="1.2"/></svg>
<div class="a" style="left:338.0px;top:380px;font-size:14.5px;line-height:14.5px;color:#222;font-weight:400;">1</div>
<div class="a" style="left:361.7px;top:380px;font-size:14.5px;line-height:14.5px;color:#222;font-weight:400;letter-spacing:-0.17px;">Kitchen</div>
<div class="a" style="left:561.2px;top:380px;font-size:14.5px;line-height:14.5px;color:#222;font-weight:400;letter-spacing:0.05px;">Adjust all dors and drawers</div>
<div class="a" style="left:337.5px;top:405px;font-size:14.5px;line-height:14.5px;color:#222;font-weight:400;">2</div>
<div class="a" style="left:361.7px;top:405px;font-size:14.5px;line-height:14.5px;color:#222;font-weight:400;letter-spacing:-0.17px;">Kitchen</div>
<div class="a" style="left:561.2px;top:405px;font-size:14.5px;line-height:14.5px;color:#222;font-weight:400;letter-spacing:0.04px;">Replace door on W1541HL Left of Refer.</div>
<div class="a" style="left:483px;top:380px;width:11px;height:11px;background:#fff;border:1px solid #dcdcdc"></div>
<div class="a" style="left:528px;top:380px;width:11px;height:11px;background:#fff;border:1px solid #dcdcdc"></div>
<div class="a" style="left:988px;top:380px;width:11px;height:11px;background:#fff;border:1px solid #dcdcdc"></div>
<div class="a" style="left:483px;top:405px;width:11px;height:11px;background:#fff"></div>
<svg style="left:482px;top:403px" width="14" height="13" viewBox="0 0 14 13"><path d="M2 6.5L5.5 10L12.5 2" fill="none" stroke="#1e96e8" stroke-width="1.6"/></svg>
<div class="a" style="left:528px;top:405px;width:11px;height:11px;background:#fff"></div>
<svg style="left:527px;top:403px" width="14" height="13" viewBox="0 0 14 13"><path d="M2 6.5L5.5 10L12.5 2" fill="none" stroke="#1e96e8" stroke-width="1.6"/></svg>
<div class="a" style="left:988px;top:405px;width:11px;height:11px;background:#fff"></div>
<div class="a" style="left:328px;top:561px;width:142px;height:30px;background:linear-gradient(#fafafa,#e6e6e6);border:1px solid #c6c6c6"></div>
<div class="a" style="left:333.5px;top:569px;font-size:14px;line-height:14px;color:#222;font-weight:400;letter-spacing:0.10px;">New Service Part</div>
<svg style="left:449px;top:568px" width="16" height="16" viewBox="0 0 16 16"><path d="M6 0h4v6h6v4h-6v6H6v-6H0V6h6z" fill="#4aa534"/><path d="M6 0h4v6h6v2H6z" fill="#5cbf40" opacity="0.6"/></svg>
<div class="a" style="left:473px;top:561px;width:160px;height:30px;background:linear-gradient(#fafafa,#e6e6e6);border:1px solid #c6c6c6"></div>
<div class="a" style="left:480.5px;top:569px;font-size:14px;line-height:14px;color:#222;font-weight:400;letter-spacing:0.22px;">Delete Service Part</div>
<svg style="left:611px;top:568px" width="16" height="16" viewBox="0 0 16 16"><path d="M1.5 1.5L14.5 14.5M14.5 1.5L1.5 14.5" stroke="#e0433a" stroke-width="2.8"/></svg>
<div class="a" style="left:645.5px;top:568px;font-size:19px;line-height:19px;color:#4a4a4a;font-weight:400;letter-spacing:-0.54px;-webkit-text-stroke:0.1px #fff">Service Parts</div>
<div class="a" style="left:326px;top:595px;width:712px;height:136px;background:#fff;border:1px solid #cfcfcf"></div>
<div class="a" style="left:327px;top:596px;width:694px;height:23px;background:linear-gradient(#fdfdfd,#e6e6e6);border-bottom:1px solid #d0d0d0"></div>
<div class="a" style="left:1021px;top:596px;width:16px;height:134px;background:#f0f0f0"></div>
<div class="a" style="left:1021px;top:596px;width:16px;height:23px;background:linear-gradient(#fdfdfd,#e6e6e6);border-bottom:1px solid #d0d0d0"></div>
<div class="a" style="left:327px;top:619px;width:694px;height:45px;background:#cce8f6"></div>
<div class="a" style="left:327px;top:664px;width:694px;height:20px;background:#f2f2f2"></div>
<div class="a" style="left:327px;top:704px;width:694px;height:20px;background:#f2f2f2"></div>
<div class="a" style="left:362px;top:596px;width:1px;height:134px;background:#d4d4d4"></div>
<div class="a" style="left:465px;top:596px;width:1px;height:134px;background:#d4d4d4"></div>
<div class="a" style="left:573px;top:596px;width:1px;height:134px;background:#d4d4d4"></div>
<div class="a" style="left:642px;top:596px;width:1px;height:134px;background:#d4d4d4"></div>
<div class="a" style="left:712px;top:596px;width:1px;height:134px;background:#d4d4d4"></div>
<div class="a" style="left:782px;top:596px;width:1px;height:134px;background:#d4d4d4"></div>
<div class="a" style="left:832px;top:596px;width:1px;height:134px;background:#d4d4d4"></div>
<div class="a" style="left:1020px;top:596px;width:1px;height:23px;background:#d4d4d4"></div>
<div class="a" style="left:332.7px;top:601px;font-size:14px;line-height:14px;color:#222;font-weight:400;letter-spacing:0.05px;">Qty</div>
<div class="a" style="left:389.6px;top:601px;font-size:14px;line-height:14px;color:#222;font-weight:400;letter-spacing:-0.35px;">Part PO</div>
<div class="a" style="left:473.9px;top:601px;font-size:14px;line-height:14px;color:#222;font-weight:400;letter-spacing:0.41px;">Nomenclature</div>
<div class="a" style="left:581.5px;top:601px;font-size:14px;line-height:14px;color:#222;font-weight:400;letter-spacing:0.28px;">Ordered</div>
<div class="a" style="left:656.0px;top:601px;font-size:14px;line-height:14px;color:#222;font-weight:400;letter-spacing:0.42px;">Tent.</div>
<div class="a" style="left:721.9px;top:601px;font-size:14px;line-height:14px;color:#222;font-weight:400;letter-spacing:-0.58px;">SO Num</div>
<div class="a" style="left:791.7px;top:601px;font-size:14px;line-height:14px;color:#222;font-weight:400;letter-spacing:-0.50px;">Zone</div>
<div class="a" style="left:891.8px;top:601px;font-size:14px;line-height:14px;color:#222;font-weight:400;letter-spacing:0.24px;">Description</div>
<svg style="left:365px;top:597px" width="6" height="7" viewBox="0 0 6 7"><path d="M0.3 3L3 0.2L5.7 3zM0.3 4L3 6.8L5.7 4z" fill="#999"/></svg>
<svg style="left:646px;top:597px" width="6" height="7" viewBox="0 0 6 7"><path d="M0.3 3L3 0.2L5.7 3zM0.3 4L3 6.8L5.7 4z" fill="#999"/></svg>
<svg style="left:453px;top:603px" width="10" height="10" viewBox="0 0 10 10"><circle cx="6" cy="4" r="3" fill="none" stroke="#777" stroke-width="1.1"/><path d="M3.8 6.2L0.8 9.2" stroke="#777" stroke-width="1.3"/></svg>
<svg style="left:700px;top:603px" width="10" height="10" viewBox="0 0 10 10"><circle cx="6" cy="4" r="3" fill="none" stroke="#777" stroke-width="1.1"/><path d="M3.8 6.2L0.8 9.2" stroke="#777" stroke-width="1.3"/></svg>
<svg style="left:1026px;top:604px" width="5" height="8" viewBox="0 0 5 8"><path d="M1 0.5L4.5 4L1 7.5z" fill="#777"/></svg>
<svg style="left:1022px;top:622px" width="13" height="8" viewBox="0 0 13 8"><path d="M1.5 6.5L6.5 1.5L11.5 6.5" fill="none" stroke="#bdbdbd" stroke-width="1.2"/></svg>
<svg style="left:1022px;top:717px" width="13" height="8" viewBox="0 0 13 8"><path d="M1.5 1.5L6.5 6.5L11.5 1.5" fill="none" stroke="#bdbdbd" stroke-width="1.2"/></svg>
<div class="a" style="left:340.0px;top:635px;font-size:14.5px;line-height:14.5px;color:#222;font-weight:400;">1</div>
<div class="a" style="left:366.0px;top:635px;font-size:14.5px;line-height:14.5px;color:#222;font-weight:400;letter-spacing:-1.09px;">S1002JK1</div>
<div class="a" style="left:469.3px;top:635px;font-size:14.5px;line-height:14.5px;color:#222;font-weight:400;letter-spacing:-0.51px;">DRW1541HL</div>
<div class="a" style="left:578.1px;top:635px;font-size:14.5px;line-height:14.5px;color:#222;font-weight:400;letter-spacing:0.49px;">05/21/19</div>
<div class="a" style="left:644px;top:635px;width:63px;height:18px;overflow:hidden">
<div class="a" style="left:0.5px;top:0px;font-size:14.5px;line-height:14.5px;color:#222;font-weight:400;letter-spacing:0.00px;">6/12/2019</div>
</div>
<div class="a" style="left:728.7px;top:635px;font-size:14.5px;line-height:14.5px;color:#222;font-weight:400;letter-spacing:-0.28px;">12365</div>
<div class="a" style="left:786.3px;top:635px;font-size:14.5px;line-height:14.5px;color:#222;font-weight:400;letter-spacing:-1.10px;">WC1</div>
<div class="a" style="left:834.8px;top:626px;font-size:14.5px;line-height:14.5px;color:#222;font-weight:400;letter-spacing:0.07px;">Door for W1541 Hinge Left.</div>
<div class="a" style="left:834.8px;top:644px;font-size:14.5px;line-height:14.5px;color:#222;font-weight:400;letter-spacing:0.00px;">Left of Refer</div>
<div class="a" style="left:0;top:0;width:1056px;height:760px;border:1px solid #bdbdbd"></div>
</body></html>
